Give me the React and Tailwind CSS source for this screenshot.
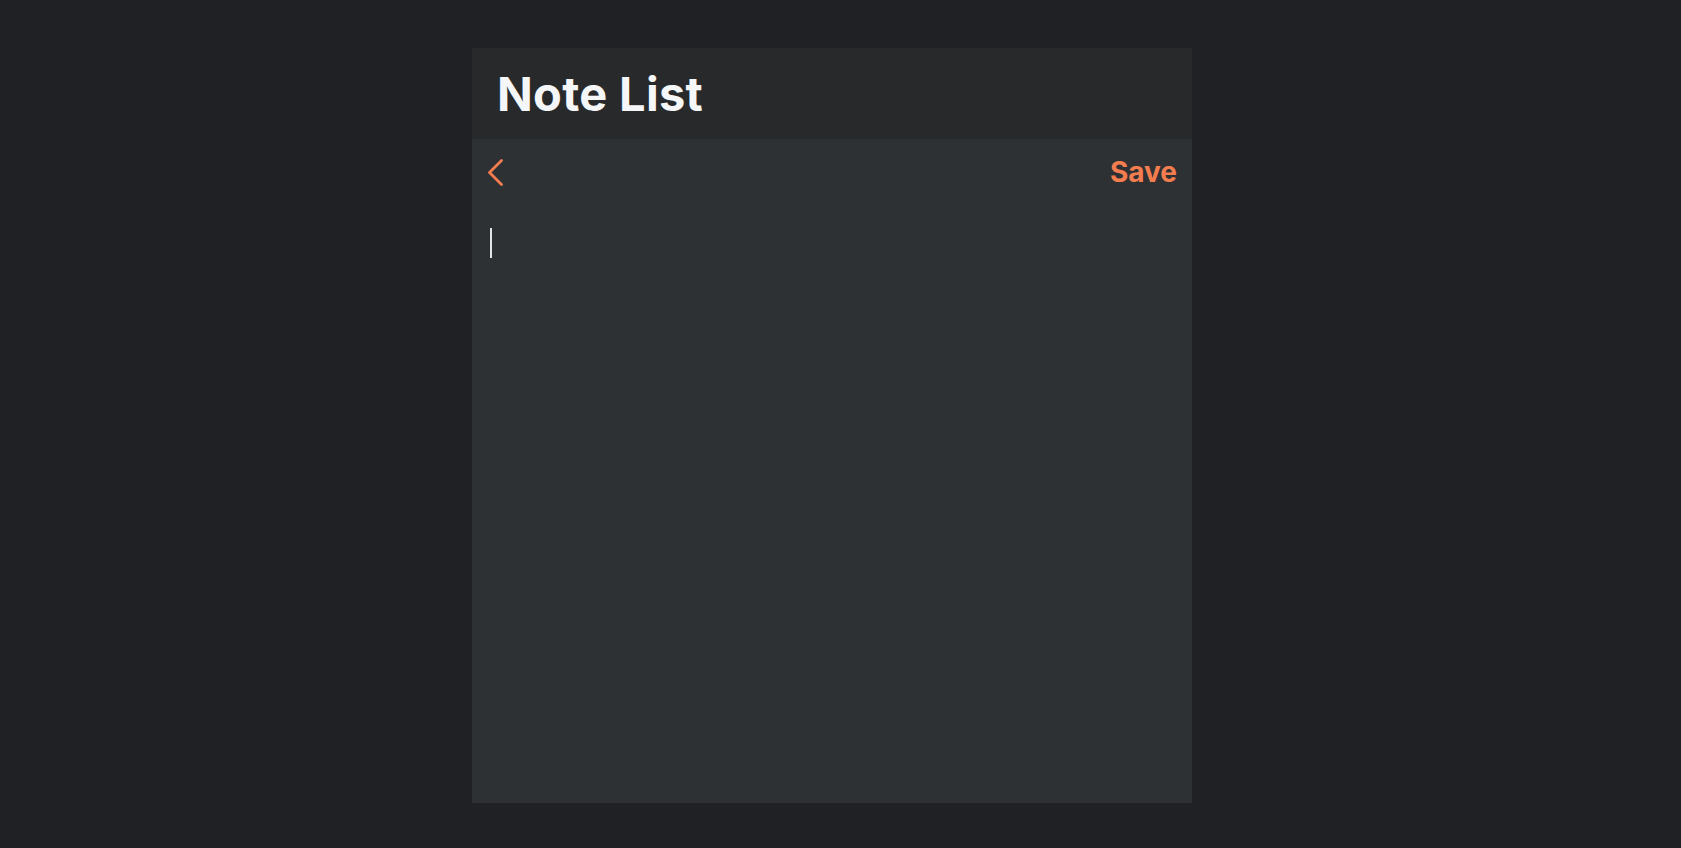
import { useState } from 'react'

export default function App() {
    const [text, setText] = useState('')

    return (
        <div className="flex min-h-screen justify-center bg-[#202124] pt-12" style={{ fontFamily: 'Inter, "Noto Sans", sans-serif' }}>
            <div className="mr-[17px] flex h-[755px] w-[720px] flex-col bg-[#2e3134]">
                <div className="flex h-[91px] items-center bg-[#28292b] px-[25px]">
                    <h1 className="text-[47px] font-bold leading-none tracking-[0.3px] text-[#f4f6f8]">Note List</h1>
                </div>

                <div className="flex items-center justify-between pl-[14px] pr-[15px] pt-[19px]">
                    <button className="flex h-[27px] w-[18px] items-center justify-center">
                        <svg width="17" height="27" viewBox="0 0 17 27" fill="none">
                            <polyline points="14.5,1.5 2.5,13.5 14.5,25.5" stroke="#f47d4f" strokeWidth="2.8" strokeLinecap="round" strokeLinejoin="round" />
                        </svg>
                    </button>
                    <button className="text-[28px] font-bold leading-none text-[#f47d4f]">Save</button>
                </div>

                <div className="relative flex-1 px-[18px] pt-[44px]">
                    <textarea
                        value={text}
                        onChange={(e) => setText(e.target.value)}
                        className="h-full w-full resize-none bg-transparent text-[24px] leading-[30px] text-[#e6e6e6] caret-transparent outline-none"
                    />
                    {text === '' && (
                        <span className="pointer-events-none absolute left-[18px] top-[42px] h-[30px] w-[2px] bg-[#e4e4e4]" />
                    )}
                </div>
            </div>
        </div>
    )
}
